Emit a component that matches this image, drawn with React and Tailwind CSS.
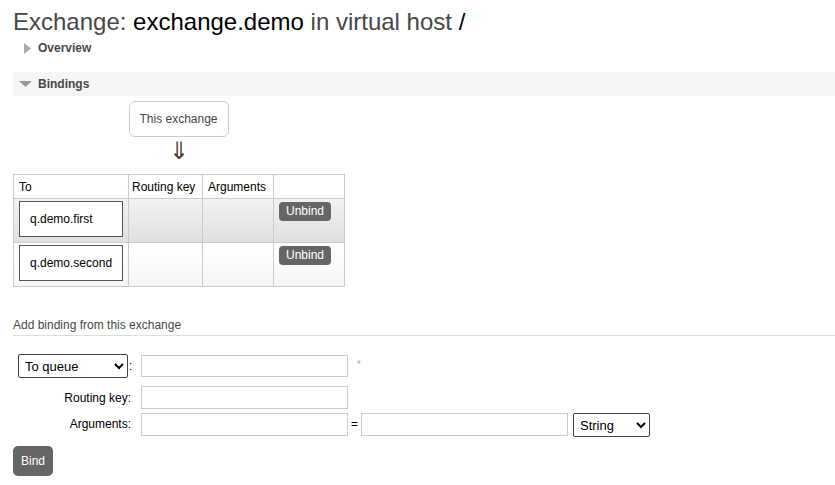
import { useState } from 'react'

const bindings = [
  { queue: 'q.demo.first', routingKey: '', args: '' },
  { queue: 'q.demo.second', routingKey: '', args: '' },
]

function SectionToggle({ open, label, shaded }) {
  return (
    <div className={`flex items-center h-6 ${shaded ? 'bg-[#f5f5f5]' : ''}`}>
      <span className="w-[25px] flex justify-center">
        {open ? (
          <svg width="13" height="6" viewBox="0 0 13 6">
            <path d="M0 0 L13 0 L6.5 6 Z" fill="#999" />
          </svg>
        ) : (
          <svg width="7" height="11" viewBox="0 0 7 11" className="ml-[4px]">
            <path d="M0 0 L7 5.5 L0 11 Z" fill="#aaa" />
          </svg>
        )}
      </span>
      <span className="text-[12px] font-bold text-[#484848]">{label}</span>
    </div>
  )
}

function GrayButton({ children, className = '' }) {
  return (
    <button className={`bg-[#666] text-white text-[12px] rounded-[4px] ${className}`}>
      {children}
    </button>
  )
}

export default function App() {
  const [dest, setDest] = useState('queue')

  return (
    <div className="w-[835px] h-[485px] bg-white overflow-hidden font-['Liberation_Sans',Arial,sans-serif] text-black">
      <div className="pl-[13px]">
        <h1 className="pt-[8px] text-[24px] leading-[28px] text-[#484848]">
          Exchange: <span className="text-black">exchange.demo</span> in virtual host{' '}
          <span className="text-black">/</span>
        </h1>

        <SectionToggle label="Overview" />

        <div className="mt-[12px]">
          <SectionToggle open shaded label="Bindings" />
        </div>

        {/* exchange node + arrow */}
        <div className="w-[331px] flex flex-col items-center pt-[5px]">
          <div className="w-[100px] h-[36px] border border-[#ccc] rounded-[6px] flex items-center justify-center text-[12px] text-[#484848]">
            This exchange
          </div>
          <div className="h-[28px] text-[24px] leading-[28px] text-[#4a3b2e]">⇓</div>
        </div>

        <table className="mt-[9px] border-collapse text-[12px]">
          <thead>
            <tr className="h-[24px]">
              <th className="w-[115px] border border-[#ccc] text-left font-normal px-[5px]">To</th>
              <th className="w-[74px] border border-[#ccc] text-left font-normal px-[3px]">Routing key</th>
              <th className="w-[71px] border border-[#ccc] text-left font-normal px-[5px]">Arguments</th>
              <th className="w-[71px] border border-[#ccc]"></th>
            </tr>
          </thead>
          <tbody>
            {bindings.map((b, i) => (
              <tr
                key={b.queue}
                className={`h-[44px] ${
                  i === 0
                    ? 'bg-gradient-to-b from-[#f2f2f2] to-[#e0e0e0]'
                    : 'bg-gradient-to-b from-white to-[#f6f6f6]'
                }`}
              >
                <td className="border border-[#ccc] px-[5px] align-top pt-[2px]">
                  <div className="w-[104px] h-[36px] border border-[#555] bg-white flex items-center pl-[10px]">
                    {b.queue}
                  </div>
                </td>
                <td className="border border-[#ccc]">{b.routingKey}</td>
                <td className="border border-[#ccc]">{b.args}</td>
                <td className="border border-[#ccc] align-top pt-[3px] pl-[5px]">
                  <GrayButton className="w-[52px] h-[19px] leading-[19px]">Unbind</GrayButton>
                </td>
              </tr>
            ))}
          </tbody>
        </table>

        <div className="mt-[31px] text-[12px] leading-[14px] text-[#484848] pb-[3px] border-b border-[#ddd]">
          Add binding from this exchange
        </div>

        <div className="pt-[18px] pl-[5px] text-[12px]">
          <div className="flex items-center h-[24px]">
            <select
              value={dest}
              onChange={e => setDest(e.target.value)}
              className="w-[110px] h-[24px] border border-[#444] rounded-[2px] text-[13px] pl-[2px] bg-white"
            >
              <option value="queue">To queue</option>
              <option value="exchange">To exchange</option>
            </select>
            <span className="ml-[1px] w-[12px]">:</span>
            <input className="w-[207px] h-[22px] border border-[#ccc]" />
            <span className="ml-[9px] -mt-[4px] text-[#f88] text-[10px]">*</span>
          </div>

          <div className="flex items-center mt-[8px] h-[23px]">
            <label className="w-[113px] text-right">Routing key:</label>
            <input className="ml-[10px] w-[207px] h-[23px] border border-[#ccc]" />
          </div>

          <div className="flex items-start mt-[4px] h-[24px]">
            <label className="w-[113px] text-right leading-[23px]">Arguments:</label>
            <input className="ml-[10px] w-[207px] h-[23px] border border-[#ccc]" />
            <span className="w-[13px] text-center leading-[23px]">=</span>
            <input className="w-[207px] h-[23px] border border-[#ccc]" />
            <select className="ml-[5px] w-[77px] h-[24px] border border-[#444] rounded-[2px] text-[13px] pl-[2px] bg-white">
              <option>String</option>
              <option>Number</option>
              <option>Boolean</option>
            </select>
          </div>
        </div>

        <GrayButton className="mt-[9px] w-[40px] h-[30px] rounded-[5px]">Bind</GrayButton>
      </div>
    </div>
  )
}
